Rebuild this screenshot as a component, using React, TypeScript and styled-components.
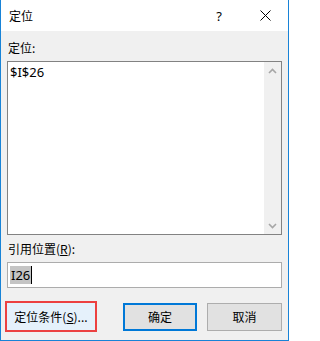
import React from 'react';
import styled, { createGlobalStyle } from 'styled-components';

const GlobalStyle = createGlobalStyle`
  html, body {
    margin: 0;
    padding: 0;
    background: #ffffff;
  }
  * {
    box-sizing: border-box;
  }
`;

const Window = styled.div`
  width: 289px;
  height: 341px;
  display: flex;
  flex-direction: column;
  border: 1px solid #1883d7;
  border-top: none;
  background: #f0f0f0;
  font-family: 'Noto Sans CJK SC', 'Noto Sans', sans-serif;
  font-size: 12px;
  color: #000;
`;

const TitleBar = styled.div`
  height: 31px;
  display: flex;
  align-items: center;
  background: #ffffff;
  padding-left: 8px;
`;

const TitleText = styled.div`
  flex: 1;
  font-size: 12px;
  line-height: 16px;
`;

const TitleButton = styled.div<{ $width: number }>`
  width: ${(p) => p.$width}px;
  height: 31px;
  display: flex;
  align-items: center;
  justify-content: center;
  font-family: 'Noto Sans', sans-serif;
  font-size: 13px;
`;

const Body = styled.div`
  flex: 1;
  display: flex;
  flex-direction: column;
  padding: 8px 6px 0 6px;
`;

const Label = styled.div<{ $top?: number }>`
  line-height: 18px;
  height: 18px;
  margin-top: ${(p) => p.$top ?? 0}px;
  margin-bottom: 4px;
  padding-left: 1px;
`;

const Underlined = styled.span`
  text-decoration: underline;
  text-underline-offset: 1px;
`;

const ListBox = styled.div`
  height: 174px;
  display: flex;
  background: #ffffff;
  border: 1px solid #828282;
`;

const ListItems = styled.div`
  flex: 1;
  padding: 1px 2px;
  font-family: 'Noto Sans', 'Noto Sans CJK SC', sans-serif;
  font-size: 13px;
  line-height: 18px;
`;

const ScrollBar = styled.div`
  width: 17px;
  display: flex;
  flex-direction: column;
  justify-content: space-between;
  background: #f0f0f0;
`;

const ScrollArrow = styled.div`
  height: 17px;
  display: flex;
  align-items: center;
  justify-content: center;
`;

const TextInput = styled.div`
  height: 26px;
  display: flex;
  align-items: center;
  background: #ffffff;
  border: 1px solid #acacac;
  padding-left: 2px;
  font-family: 'Noto Sans', 'Noto Sans CJK SC', sans-serif;
  font-size: 13px;
`;

const Selection = styled.span`
  background: #c4c4c4;
  line-height: 18px;
  padding: 0 1px;
`;

const Caret = styled.span`
  display: inline-block;
  width: 1px;
  height: 18px;
  background: #000;
`;

const ButtonRow = styled.div`
  display: flex;
  align-items: center;
  height: 31px;
  margin-top: 13px;
  gap: 10px;
`;

type Variant = 'marked' | 'default' | 'plain';

const Button = styled.div<{ $variant: Variant; $width: number }>`
  width: ${(p) => p.$width}px;
  height: ${(p) => (p.$variant === 'marked' ? 31 : 28)}px;
  display: flex;
  align-items: center;
  justify-content: center;
  font-size: 12px;
  background: ${(p) => (p.$variant === 'marked' ? '#e5f1fb' : '#e1e1e1')};
  border: ${(p) =>
    p.$variant === 'marked'
      ? '2px solid #ec4141'
      : p.$variant === 'default'
      ? '2px solid #0078d7'
      : '1px solid #adadad'};
  margin-left: ${(p) => (p.$variant === 'marked' ? '-2px' : '0')};
  margin-right: ${(p) => (p.$variant === 'marked' ? 'auto' : '0')};
`;

const Chevron = ({ up }: { up?: boolean }) => (
  <svg width="9" height="6" viewBox="0 0 9 6">
    <path
      d={up ? 'M1 5 L4.5 1.5 L8 5' : 'M1 1 L4.5 4.5 L8 1'}
      fill="none"
      stroke="#a6a6a6"
      strokeWidth="1.6"
    />
  </svg>
);

const CloseIcon = () => (
  <svg width="11" height="11" viewBox="0 0 11 11">
    <path d="M0.5 0.5 L10.5 10.5 M10.5 0.5 L0.5 10.5" stroke="#000" strokeWidth="1" />
  </svg>
);

const App: React.FC = () => {
  return (
    <>
      <GlobalStyle />
      <Window>
        <TitleBar>
          <TitleText>定位</TitleText>
          <TitleButton $width={46}>?</TitleButton>
          <TitleButton $width={46}>
            <CloseIcon />
          </TitleButton>
        </TitleBar>
        <Body>
          <Label>定位:</Label>
          <ListBox>
            <ListItems>$I$26</ListItems>
            <ScrollBar>
              <ScrollArrow>
                <Chevron up />
              </ScrollArrow>
              <ScrollArrow>
                <Chevron />
              </ScrollArrow>
            </ScrollBar>
          </ListBox>
          <Label $top={5}>
            引用位置(<Underlined>R</Underlined>):
          </Label>
          <TextInput>
            <Selection>I26</Selection>
            <Caret />
          </TextInput>
          <ButtonRow>
            <Button $variant="marked" $width={92}>
              定位条件(<Underlined>S</Underlined>)...
            </Button>
            <Button $variant="default" $width={74}>
              确定
            </Button>
            <Button $variant="plain" $width={75}>
              取消
            </Button>
          </ButtonRow>
        </Body>
      </Window>
    </>
  );
};

export default App;
